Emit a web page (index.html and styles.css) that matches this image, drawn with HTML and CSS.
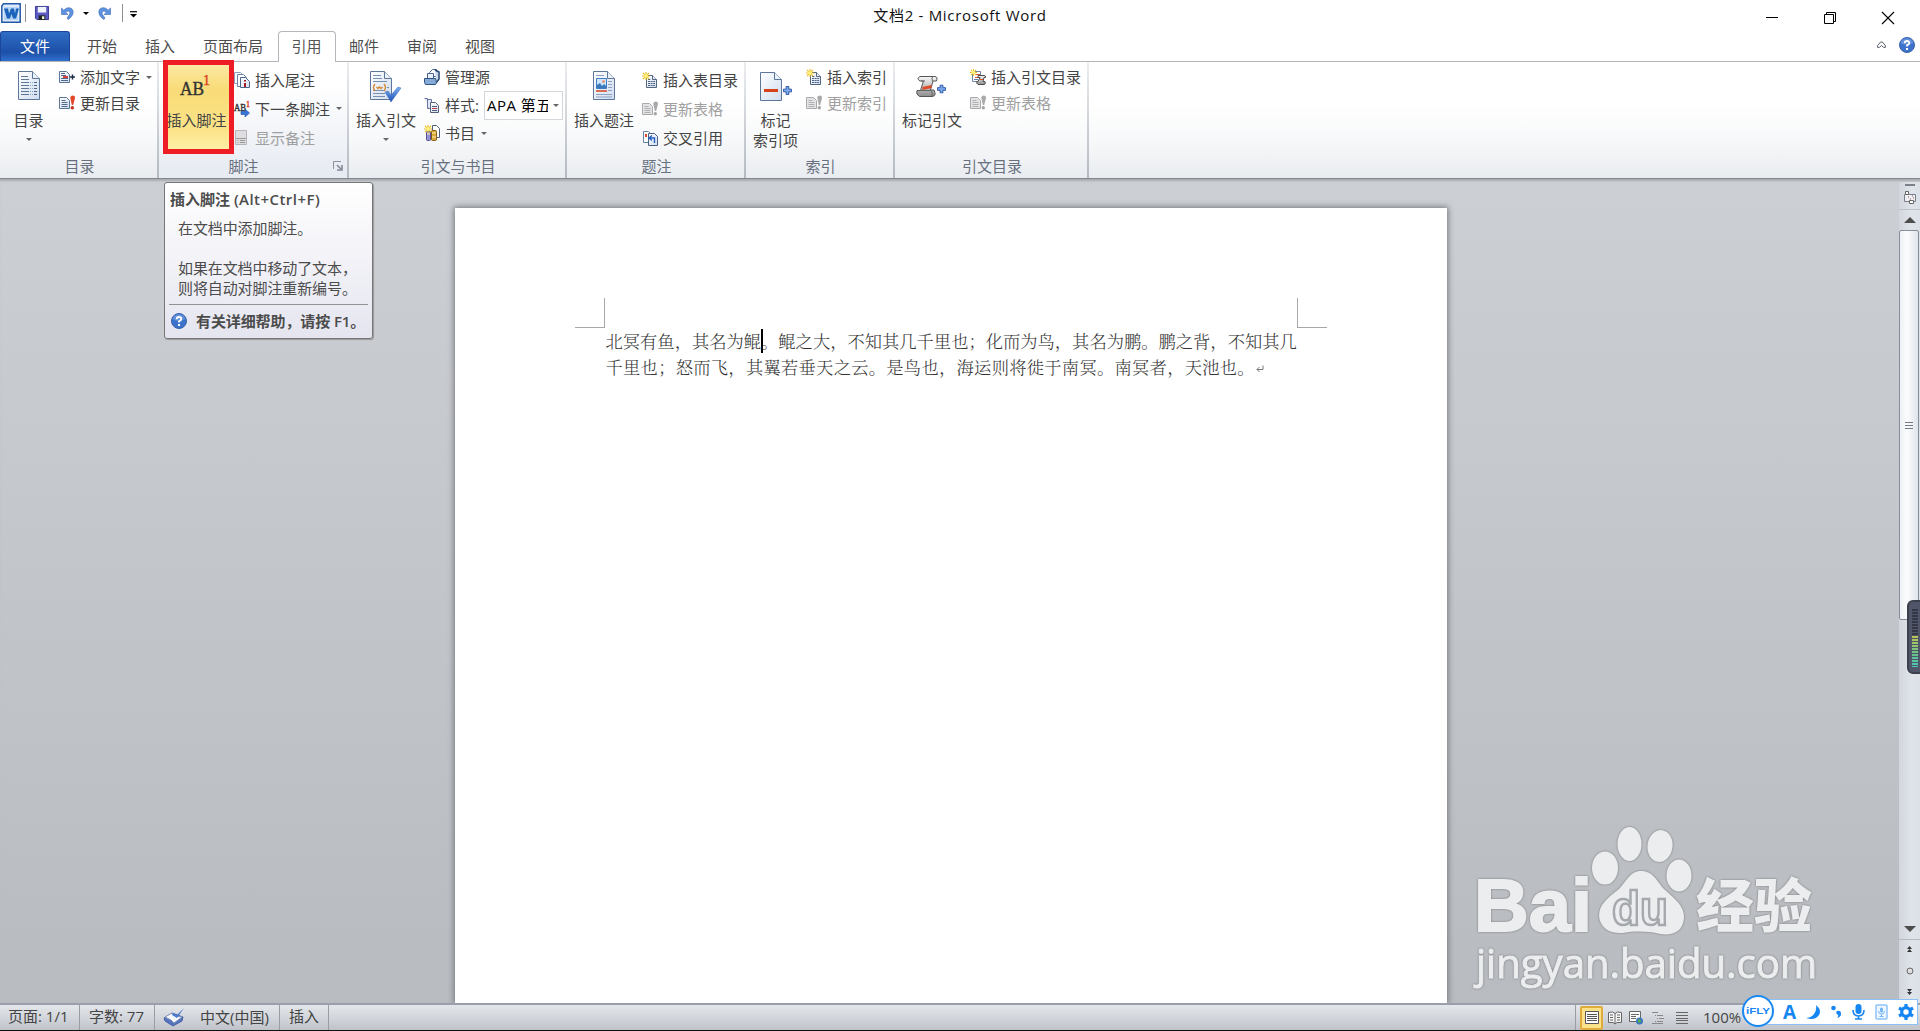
FILE: index.html
```html
<!DOCTYPE html>
<html lang="zh-CN">
<head>
<meta charset="utf-8">
<title>文档2 - Microsoft Word</title>
<link rel="stylesheet" href="styles.css">
</head>
<body>
<svg width="0" height="0" class="defs">
  <defs>
    <linearGradient id="paper" x1="0" y1="0" x2="1" y2="1"><stop offset="0" stop-color="#fff"/><stop offset="1" stop-color="#cfdcf0"/></linearGradient>
    <linearGradient id="blue" x1="0" y1="0" x2="0" y2="1"><stop offset="0" stop-color="#7fb0ee"/><stop offset="1" stop-color="#1d4fb4"/></linearGradient>
    <linearGradient id="metal" x1="0" y1="0" x2="0" y2="1"><stop offset="0" stop-color="#f8f8f8"/><stop offset="1" stop-color="#8e8e8e"/></linearGradient>
    <symbol id="star" viewBox="0 0 8 8"><path d="M4 0v8M0 4h8M1 1l6 6M7 1L1 7" stroke="#e9bf2b" stroke-width="1.2"/><circle cx="4" cy="4" r="2" fill="#fff27c"/></symbol>
    <symbol id="update" viewBox="0 0 16 16"><path d="M.5 2.500h7l3 3v8H.5z" fill="url(#paper)" stroke="#5c7597"/><path d="M2.500 5.500h4M2.500 7.500h6M2.500 9.500h6M2.500 11.500h6" stroke="#53698a"/><path d="M11.300 3q0-2.500 2.500-2.500T16 3l-1.800 7h-1.400z" fill="#e2472a"/><circle cx="13.300" cy="12.700" r="1.700" fill="#c92e16"/></symbol>
    <symbol id="update-off" viewBox="0 0 16 16"><path d="M.5 2.500h7l3 3v8H.5z" fill="#e4e4e6" stroke="#aaaaad"/><path d="M2.500 5.500h4M2.500 7.500h6M2.500 9.500h6M2.500 11.500h6" stroke="#b1b1b4"/><path d="M11.300 3q0-2.500 2.500-2.500T16 3l-1.800 7h-1.400z" fill="#aaa"/><circle cx="13.300" cy="12.700" r="1.700" fill="#a5a5a5"/></symbol>
    <symbol id="index" viewBox="0 0 16 16"><path d="M4.500 3.500h6l4 4v8h-10z" fill="url(#paper)" stroke="#54657e"/><path d="M10.500 3.500v4h4" fill="#e7eef8" stroke="#54657e"/><path d="M6 7.500h3M6 9.500h7M6 11.500h7M6 13.500h7" stroke="#4c6284" stroke-dasharray="2 .6"/><use href="#star" width="8" height="8"/></symbol>
    <symbol id="help" viewBox="0 0 16 16"><circle cx="8" cy="8" r="7.500" fill="#3d73cb" stroke="#3a62ae"/><path d="M1.500 6a6.800 6.800 0 0 1 13 0q-7 4-13 0z" fill="#719de0" opacity=".7"/><path d="M5.700 6.200Q5.700 4 8 4t2.300 2Q10.300 7.300 8 8.300v1.200" fill="none" stroke="#fff" stroke-width="1.800"/><path d="M7 11h2v2H7z" fill="#fff"/></symbol>
    <symbol id="plus" viewBox="0 0 10 10"><path d="M3.500.5h3v3h3v3h-3v3h-3v-3h-3v-3h3z" fill="#7aa7ee" stroke="#234f9c"/></symbol>
  </defs>
</svg>

<header class="titlebar">
  <div class="quick">
    <svg class="word" width="20" height="20" viewBox="0 0 20 20"><path d="M2.500.8h16.700v18.400H.8V3z" fill="#dcebfb" stroke="#2459a5" stroke-width="1.500"/><path d="M3 4h14v13H3z" fill="#b8d4f3"/><path d="M3 5.500h4l1 5 2-5h3l1 5 1-5h3l-3 10h-3l-1.500-4.500L9 15.500H6z" fill="#1b63bb"/></svg>
    <i class="vline"></i>
    <svg class="save" width="14" height="14" viewBox="0 0 15 15"><path d="M.5.5h14v14H2L.5 13z" fill="#5a5ac2" stroke="#34348d"/><path d="M3 1h9v6H3z" fill="#f0f3fb"/><path d="M4 10h7v5H4z" fill="#222"/><path d="M7.500 11H10v3H7.500z" fill="#e9f4d7"/></svg>
    <svg class="undo" width="13" height="13" viewBox="0 0 13 13"><path d="M.5 1v6.500H7L4.800 5.600C7 3 10 4 8.500 7.500L6 11l1 1.500C13 9 13.500 3 10 1.200 7.500 0 4.500 1 2.800 3.200z" fill="#5d92df" stroke="#3e69b9" stroke-width=".6"/></svg>
    <i class="tri dark"></i>
    <svg class="redo" width="13" height="13" viewBox="0 0 13 13"><path d="M12.500 1v6.500H6l2.200-1.900C6 3 3 4 4.500 7.500L7 11l-1 1.500C0 9-.5 3 3 1.200c2.500-1.200 5.500-.2 7.200 2z" fill="#5d92df" stroke="#3e69b9" stroke-width=".6"/></svg>
    <i class="vline second"></i>
    <svg class="custom" width="7" height="7" viewBox="0 0 7 7"><path d="M0 .7h7" stroke="#000" stroke-width="1.200"/><path d="M0 3h7L3.500 6.500z"/></svg>
  </div>
  <h1>文档2 - Microsoft Word</h1>
  <div class="window">
    <svg width="12" height="12" viewBox="0 0 12 12"><path d="M0 5.500h12" stroke="#000"/></svg>
    <svg width="12" height="12" viewBox="0 0 12 12"><path d="M.5 2.500h9v9h-9zM2.500 2.500v-2h9v9h-2" fill="none" stroke="#000"/></svg>
    <svg width="12" height="12" viewBox="0 0 12 12"><path d="M0 0l12 12M12 0L0 12" stroke="#000" stroke-width="1.100"/></svg>
  </div>
</header>

<nav class="tabs">
  <a class="file">文件</a><a>开始</a><a>插入</a><a>页面布局</a><a class="current">引用</a><a>邮件</a><a>审阅</a><a>视图</a>
  <div class="tabtools">
    <svg width="9" height="8" viewBox="0 0 9 8"><path d="M.6 6.400V4.500L3.600 1h1.800l3 3.500v1.900H6.500l-2-2-2 2z" fill="#fff" stroke="#59606a"/></svg>
    <svg width="16" height="16"><use href="#help"/></svg>
  </div>
</nav>

<main class="ribbon">
  <section class="group g1">
    <div class="body">
      <div class="big">
        <svg width="32" height="32" viewBox="0 0 32 32"><path d="M5.500 1.500h14l7 7v21h-21z" fill="url(#paper)" stroke="#5d7699"/><path d="M19.500 1.500v7h7" fill="#e9f0fa" stroke="#5d7699"/><path d="M8 6.500h7M8 9.500h8M8 12.500h8M8 15.500h8M8 18.500h8M8 21.500h8M8 24.500h8" stroke="#5f7698"/><path d="M17 12.500h3M17 15.500h3M17 18.500h3M17 21.500h3M17 24.500h3" stroke="#86a1c4" stroke-dasharray="1 1"/><path d="M21 12.500h3M21 15.500h3M21 18.500h3M21 21.500h3M21 24.500h3" stroke="#4c6284"/></svg>
        <span>目录</span><i class="tri"></i>
      </div>
      <div class="stack two">
        <div class="row"><svg width="16" height="16"><path d="M.5 2.500h7l3 3v8H.5z" fill="url(#paper)" stroke="#5c7597"/><path d="M2 4.500h4M2 11.500h7M2 9.500h7M2 6.500h5" stroke="#53698a"/><path d="M4 7h5v2H4z" fill="#da4141"/><path d="M11 8h5M13.500 5.500v5" stroke="#1f2f48" stroke-width="1.500"/></svg><span>添加文字</span><i class="tri"></i></div>
        <div class="row"><svg width="16" height="16"><use href="#update"/></svg><span>更新目录</span></div>
      </div>
    </div>
    <h2>目录</h2>
  </section>

  <section class="group g2">
    <div class="body">
      <div class="big hot">
        <svg width="32" height="32" viewBox="0 0 32 32"><text x="-1" y="25" class="ab" textLength="24" lengthAdjust="spacingAndGlyphs">AB</text><text x="22" y="15" class="sup">1</text></svg>
        <span>插入脚注</span>
      </div>
      <div class="stack three">
        <div class="row"><svg width="16" height="16"><path d="M.5.5h6l3 3v8h-9z" fill="#fff" stroke="#8ba0be"/><path d="M3.500 2.500h6l3 3v9h-9z" fill="#fff" stroke="#6983a8"/><path d="M6.500 5.500h5l4 4v6h-9z" fill="url(#paper)" stroke="#4e658a"/><path d="M10 8h2v1.500h-2zM10 11h2v4h-2z" fill="#a51d1d"/></svg><span>插入尾注</span></div>
        <div class="row"><svg width="16" height="16"><text x="0" y="10" class="ab mini" textLength="12" lengthAdjust="spacingAndGlyphs">AB</text><text x="12" y="6" class="sup mini">1</text><path d="M7 10.500h4V8l4.500 4-4.500 4v-2.500H7z" fill="#3574d8" stroke="#24509f" stroke-width=".6"/></svg><span>下一条脚注</span><i class="tri"></i></div>
        <div class="row off"><svg width="16" height="16"><path d="M1.500.5h11v14h-11z" fill="#dedee1" stroke="#b5b5ba"/><path d="M2 8.500h10" stroke="#999"/><path d="M3.500 10.500h1M6 10.500h5M3.500 12.500h1M6 12.500h5" stroke="#999"/></svg><span>显示备注</span></div>
      </div>
    </div>
    <h2>脚注</h2>
    <svg class="launcher" width="10" height="10" viewBox="0 0 10 10"><path d="M.5 8V.5H8" fill="none" stroke="#8a919c"/><path d="M4 9h5V4M4 4l4 4" fill="none" stroke="#848b96" stroke-width="1.600"/></svg>
    <div class="marker"></div>
  </section>

  <section class="group g3">
    <div class="body">
      <div class="big">
        <svg width="32" height="32" viewBox="0 0 32 32"><path d="M.5 1.500h14l7 7v21H.5z" fill="url(#paper)" stroke="#5d7699"/><path d="M14.500 1.500v7h7" fill="#e9f0fa" stroke="#5d7699"/><path d="M3 5.500h8M3 8.500h9M3 11.500h14M3 20.500h12M3 23.500h12M3 26.500h12M17 17.500h2" stroke="#7890b0"/><path d="M5 14q-3 3.500 0 7M14 14q3 3.500 0 7M6.500 17l1.500 1.500L9.500 17l1.500 1.500 1.500-1.500" fill="none" stroke="#d68528" stroke-width="1.300"/><path d="M15 22l3-1 3 4 7-8 3 1-10 14z" fill="url(#blue)" stroke="#326abd" stroke-width=".5"/></svg>
        <span>插入引文</span><i class="tri"></i>
      </div>
      <div class="stack cite">
        <div class="row"><svg width="16" height="16"><path d="M5.500 3.500l3-3h4v7h-7z" fill="#fff" stroke="#46658f"/><path d="M11 1l4 2v7l-3 4" fill="#cbd9ed" stroke="#26456f" stroke-width="1.500"/><path d="M3.500 4.500h6v6h-6z" fill="#e9f0fa" stroke="#46658f"/><path d="M.5 9.500h11l1 4-1 2H1.500l-1-2z" fill="#86a9d8" stroke="#31547f"/></svg><span>管理源</span></div>
        <div class="row"><svg width="16" height="16"><path d="M.5 1.500h3v9l2 1M3.500 2.500h4v9h-4z" fill="#e3e8f7" stroke="#6974a4"/><path d="M6.500 5.500h5l3 3v7h-8z" fill="url(#paper)" stroke="#56627b"/><path d="M8 9.500h5M8 13.500h5" stroke="#555f79"/><path d="M8 11.500h5" stroke="#c33c4a"/></svg><span>样式:</span><div class="select"><b>APA 第五</b><i class="tri"></i></div></div>
        <div class="row"><svg width="16" height="16"><path d="M8.500.5h4l3 3v9h-7z" fill="#fff" stroke="#4f6078"/><rect x="2.500" y="6.500" width="4" height="9" rx="1" fill="#9694d4" stroke="#554e91"/><rect x="7.500" y="5.500" width="5" height="10" rx="1" fill="#d9a73a" stroke="#876018"/><path d="M3 9h3M8 8h4M8 12h4" stroke="#fff2b0"/><use href="#star" width="8" height="8"/></svg><span>书目</span><i class="tri"></i></div>
      </div>
    </div>
    <h2>引文与书目</h2>
  </section>

  <section class="group g4">
    <div class="body">
      <div class="big">
        <svg width="32" height="32" viewBox="0 0 32 32"><path d="M5.500 1.500h14l7 7v21h-21z" fill="url(#paper)" stroke="#5d7699"/><path d="M19.500 1.500v7h7" fill="#e9f0fa" stroke="#5d7699"/><path d="M8 5.500h8M20 11.500h4M20 14.500h4M20 17.500h4M20 20.500h4M8 24.500h16M8 27h16" stroke="#8ca1bf"/><path d="M8.500 8.500h10v10h-10z" fill="#cde6fb" stroke="#407cc1"/><path d="M9 18v-3l3-2 2 3 2-2 2 2v2z" fill="#3b79bd"/><circle cx="15.500" cy="11.500" r="1.300" fill="#ef8650"/><path d="M8 21h11" stroke="#d64521" stroke-width="1.500"/></svg>
        <span>插入题注</span>
      </div>
      <div class="stack three">
        <div class="row"><svg width="16" height="16"><use href="#index"/></svg><span>插入表目录</span></div>
        <div class="row off"><svg width="16" height="16"><use href="#update-off"/></svg><span>更新表格</span></div>
        <div class="row"><svg width="16" height="16"><path d="M1.500 1.500h5l2 2v9h-7z" fill="#fff" stroke="#6880a4"/><path d="M3 4h2v3H3z" fill="#dc4a2b"/><path d="M6.500 3.500h6l3 3v9h-9z" fill="url(#paper)" stroke="#466084"/><path d="M12.500 13V8H8M10 5.500L7 8l3 2.500" fill="none" stroke="#285fc0" stroke-width="1.400"/></svg><span>交叉引用</span></div>
      </div>
    </div>
    <h2>题注</h2>
  </section>

  <section class="group g5">
    <div class="body">
      <div class="big">
        <svg width="32" height="32" viewBox="0 0 32 32"><path d="M.5 2.500h14l7 7v21H.5z" fill="url(#paper)" stroke="#5d7699"/><path d="M14.500 2.500v7h7" fill="#e9f0fa" stroke="#5d7699"/><path d="M4 19h14v3H4z" fill="#d6401a"/><use href="#plus" x="23" y="16" width="9" height="9"/></svg>
        <span>标记<br>索引项</span>
      </div>
      <div class="stack two">
        <div class="row"><svg width="16" height="16"><use href="#index"/></svg><span>插入索引</span></div>
        <div class="row off"><svg width="16" height="16"><use href="#update-off"/></svg><span>更新索引</span></div>
      </div>
    </div>
    <h2>索引</h2>
  </section>

  <section class="group g6">
    <div class="body">
      <div class="big">
        <svg width="32" height="32" viewBox="0 0 32 32"><path d="M4 6.500h15q3 .5 1.500 4.500H17l-2.500 9H18q3 6-2 6.500H3.500Q-.5 24.500 1 20.500h3.500l3-9.500H4q-4-2.500 0-4.500z" fill="url(#metal)" stroke="#555"/><path d="M17 6.500q-2 1-.5 4.500M5 11h4M4 20.500h11q2 2 1 5.500" fill="none" stroke="#666"/><path d="M6.500 17l9-2v3l-9 2z" fill="#df4b25"/><use href="#plus" x="21" y="14.500" width="9" height="9"/></svg>
        <span>标记引文</span>
      </div>
      <div class="stack two">
        <div class="row"><svg width="16" height="16"><path d="M2.500 2.500h8v10h-8z" fill="#fff" stroke="#6e84a8"/><path d="M5 5.500h5M5 8.500h4" stroke="#dc5134"/><path d="M4 10.500h4" stroke="#667fa5"/><path d="M8 6.500h6q2 0 1.500 2H14l-1 4h2q1 3-1 3H8q-2-1-1-3h1l2-4H8z" fill="url(#metal)" stroke="#4e4e4e"/><path d="M10 10.500h3" stroke="#df4b25"/><use href="#star" width="7" height="7"/></svg><span>插入引文目录</span></div>
        <div class="row off"><svg width="16" height="16"><use href="#update-off"/></svg><span>更新表格</span></div>
      </div>
    </div>
    <h2>引文目录</h2>
  </section>
</main>

<div class="workspace">
  <article class="page">
    <i class="crop left"></i><i class="crop right"></i>
    <p class="l1">北冥有鱼，其名为鲲<i class="caret"></i>。鲲之大，不知其几千里也；化而为鸟，其名为鹏。鹏之背，不知其几</p>
    <p class="l2">千里也；怒而飞，其翼若垂天之云。是鸟也，海运则将徙于南冥。南冥者，天池也。<svg width="8" height="8" viewBox="0 0 8 8"><path d="M7 .5v4H1M3.500 2L1 4.500 3.500 7" fill="none" stroke="#777"/></svg></p>
  </article>
  <aside class="scroll">
    <div class="ruler"><i class="split"></i><svg width="13" height="13" viewBox="0 0 13 13"><path d="M1.500 3.500h11v7h-11z" fill="#f2eff2" stroke="#777e88"/><path d="M2.500.5h3v3h-3zM6.500 9.500h4v3h-4z" fill="#fff" stroke="#666"/><path d="M5 6h1M7 8h1M9 5h1M10 7h1" stroke="#85606c"/></svg></div>
    <div class="up"><svg width="12" height="6" viewBox="0 0 12 6"><path d="M0 6h12L6 0z" fill="#4d4d4d"/></svg></div>
    <div class="track"><div class="thumb"><i></i></div></div>
    <div class="down"><svg width="12" height="6" viewBox="0 0 12 6"><path d="M0 0h12L6 6z" fill="#4d4d4d"/></svg></div>
    <div class="browse">
      <svg width="7" height="7" viewBox="0 0 7 7"><path d="M1 3h5L3.500 0zM1 6h5L3.500 3z" fill="#333"/></svg>
      <svg width="8" height="8" viewBox="0 0 8 8"><circle cx="4" cy="4" r="3" fill="#ddd" stroke="#666"/></svg>
      <svg width="7" height="7" viewBox="0 0 7 7"><path d="M1 1h5L3.500 4zM1 4h5L3.500 7z" fill="#333"/></svg>
    </div>
  </aside>
  <div class="meter"></div>
  <svg class="watermark" width="360" height="175" viewBox="0 0 360 175">
    <text x="4" y="111" class="bai" textLength="118" lengthAdjust="spacingAndGlyphs">Bai</text>
    <g><ellipse cx="135" cy="48" rx="13" ry="16.500"/><ellipse cx="159.500" cy="24" rx="12" ry="17"/><ellipse cx="190" cy="26" rx="12.500" ry="16" transform="rotate(8 190 26)"/><ellipse cx="209" cy="55.500" rx="12.500" ry="16"/><path d="M171 51c12 0 16 10 22 17 9 9 22 17 21 30-1 14-12 18-24 16-12-3-25-3-37-1-13 1-23-5-24-17 0-12 9-18 20-27 8-8 11-18 22-18z"/></g>
    <text x="142" y="105" class="du" textLength="56" lengthAdjust="spacingAndGlyphs">du</text>
    <text x="226" y="107" class="jy" textLength="116" lengthAdjust="spacingAndGlyphs">经验</text>
    <text x="6" y="158" class="site" textLength="341" lengthAdjust="spacingAndGlyphs">jingyan.baidu.com</text>
  </svg>
</div>

<footer class="status">
  <span class="s1">页面: 1/1</span><span class="s2">字数: 77</span>
  <span class="s3"><svg width="22" height="20" viewBox="0 0 22 20"><path d="M1 11l8-5 11 4-1 4-9 5-8-5z" fill="#5574bf" stroke="#4a63a8"/><path d="M2 10l7-4 3 3 7 1-8 6-3-3z" fill="#f5f7fc" stroke="#8796b5"/><path d="M10 6l3 3 8-8-7 10-5-3z" fill="#4779d1"/></svg>中文(中国)</span><span class="s4">插入</span>
  <div class="views">
    <i class="active"><svg width="14" height="14" viewBox="0 0 14 14"><path d="M.5.5h13v12H.5z" fill="#fff" stroke="#555"/><path d="M2 3.500h10M2 5.500h10M2 7.500h10M2 9.500h10" stroke="#555"/></svg></i>
    <svg width="14" height="14" viewBox="0 0 14 14"><path d="M.5 1.500l4-.5L7 2.500 9.500 1l4 .5v10H9L7 13l-2-1.500H.5zM7 2.500V13" fill="#f5f5f5" stroke="#666"/><path d="M2 4h3M2 6.500h3M2 9h3M9 4h3M9 6.500h3M9 9h3" stroke="#666"/></svg>
    <svg width="14" height="14" viewBox="0 0 14 14"><path d="M.5.500h11v10H.5z" fill="#fafafa" stroke="#666"/><path d="M2 3.500h8M2 5.500h5M2 7.500h5" stroke="#666"/><circle cx="10.500" cy="10" r="3.500" fill="#3978bd"/><path d="M9 8l3 1-1 3-2-1z" fill="#5caf4f"/></svg>
    <svg width="12" height="14" viewBox="0 0 12 14"><path d="M0 1.500h6M3 4.500h1M5 4.500h6M5 7.500h1M7 7.500h5M3 10.500h1M5 10.500h6M0 12.500h11" stroke="#888"/></svg>
    <svg width="12" height="14" viewBox="0 0 12 14"><path d="M0 1.500h12M0 4.500h12M0 7.500h12M0 9.500h12M0 12.500h12" stroke="#666"/></svg>
    <span>100%</span>
  </div>
</footer>

<div class="tip">
  <h3>插入脚注 <em>(Alt+Ctrl+F)</em></h3>
  <p>在文档中添加脚注。</p>
  <p class="more">如果在文档中移动了文本，<br>则将自动对脚注重新编号。</p>
  <div class="tiphelp"><svg width="16" height="16"><use href="#help"/></svg><b>有关详细帮助，请按 F1。</b></div>
</div>

<div class="ime">
  <svg class="badge" width="32" height="32" viewBox="0 0 32 32"><circle cx="16" cy="16" r="15" fill="#fff" stroke="#1a88f2" stroke-width="2"/><text x="4" y="19" textLength="24" lengthAdjust="spacingAndGlyphs">iFLY</text></svg>
  <b>A</b>
  <svg width="15" height="15" viewBox="0 0 15 15"><path d="M10 0q6 5 3 10-4 6-13 3 5 0 8-4t2-9z" fill="#1686f2"/></svg>
  <svg width="11" height="14" viewBox="0 0 11 14"><circle cx="2.500" cy="3" r="2.300" fill="#1686f2"/><path d="M6 6q4-1 4 3 0 3-4 4 2-2 1-3-3-2-1-4z" fill="#1686f2"/></svg>
  <svg width="13" height="16" viewBox="0 0 13 16"><rect x="3.500" width="6" height="10" rx="3" fill="#1686f2"/><path d="M1 6q0 6 5.500 6T12 6M6.500 12v3M3 15h7" fill="none" stroke="#1686f2" stroke-width="1.600"/></svg>
  <svg width="13" height="16" viewBox="0 0 13 16"><rect x="1" y="1" width="11" height="14" rx="1" fill="#eef7ff" stroke="#8ec4fa" stroke-width="1.500"/><rect x="5" y="3.500" width="3" height="5" rx="1.500" fill="#73b5f8"/><path d="M3.500 7q0 3 3 3t3-3M6.500 10v2.500M4.500 12.500h4" fill="none" stroke="#73b5f8"/></svg>
  <svg width="16" height="16" viewBox="0 0 16 16"><circle cx="8" cy="8" r="4.300" fill="none" stroke="#1686f2" stroke-width="3.200"/><path d="M8 0v3M8 13v3M1 4l2.700 1.600M12.300 10.400L15 12M1 12l2.700-1.600M12.300 5.600L15 4" stroke="#1686f2" stroke-width="3.200"/></svg>
</div>
</body>
</html>
```
FILE: styles.css
```css
* { box-sizing: border-box; margin: 0; padding: 0; }
body {
  width: 1920px; height: 1031px; overflow: hidden; position: relative;
  display: flex; flex-direction: column;
  font: 15px/20px "Open Sans", "Noto Sans CJK SC", sans-serif;
  color: #444; background: #fff;
}
svg { display: block; flex: none; overflow: visible; }
i, em { font-style: normal; flex: none; }
.defs { position: absolute; }
.tri { width: 0; height: 0; border: 3px solid transparent; border-top-color: #666; border-bottom: 0; }
.tri.dark { border-top-color: #000; }

.titlebar { height: 31px; flex: none; display: grid; grid-template-columns: 1fr auto 1fr; }
.titlebar h1 { font-size: 15px; font-weight: 400; line-height: 31px; color: #111; white-space: nowrap; letter-spacing: .7px; }
.quick { display: flex; align-items: center; padding: 0 0 5px 1px; }
.vline { width: 1px; height: 18px; background: #8f8f8f; margin: 0 9px 0 4px; }
.vline.second { margin: 0 7px 0 11px; }
.undo { margin: 0 9px 0 12px; }
.redo { margin-left: 9px; }
.custom { margin-top: 3px; }
.window { display: flex; justify-content: flex-end; gap: 46px; padding: 12px 26px 0 0; }

.tabs { height: 31px; flex: none; display: flex; align-items: stretch; border-bottom: 1px solid #b3b7bc; }
.tabs a { padding: 5px 14px 0; color: #4c4c4c; }
.tabs .file { width: 70px; margin-right: 3px; padding: 4px 0 0 19px; color: #fff; background: linear-gradient(#2f6dc4, #1d50a8 70%, #2f71cf); border: 1px solid #1b469a; border-bottom: 0; border-radius: 3px 3px 0 0; }
.tabs .current { background: #fff; border: 1px solid #b3b7bc; border-bottom: 0; border-radius: 4px 4px 0 0; margin-bottom: -1px; padding: 4px 13px 0; color: #555; position: relative; left: .5px; }
.tabtools { margin-left: auto; display: flex; align-items: center; gap: 13px; padding: 0 5px 2px 0; }

.ribbon {
  height: 117px; flex: none; display: grid;
  grid-template-columns: 159px 190px 218px 179px 149px 194px;
  background: linear-gradient(#fff 35%, #f8f9fa 65%, #e9ecf0);
  border-bottom: 1px solid #83888f;
}
.group { position: relative; display: flex; flex-direction: column; border-right: 2px solid #c3c8ce; border-image: linear-gradient(#eceef0, #b3b9c1) 1; }
.body { flex: 1; display: flex; }
.group h2 { font-size: 15px; font-weight: 400; color: #67707f; text-align: center; line-height: 22px; padding: 0 0 1px 2px; }
.g2 { background: linear-gradient(#fff 20%, #e7ebf2 95%); }
.group.g2 h2 { padding-right: 19px; padding-left: 0; }
.big { width: 74px; padding-top: 8px; display: flex; flex-direction: column; align-items: center; text-align: center; white-space: nowrap; }
.big span { margin-top: 8px; }
.big .tri { margin-top: 8px; }
.g1 .big { width: 57px; margin-right: 1px; }
.g2 .big { width: 67px; margin-left: 4px; }
.g5 .big { width: 59px; }
.hot { background: linear-gradient(#fbe9a5, #f9dc78 30%, #fbe388 75%, #fff1aa); height: 91px; border: 1px solid #f6e19b; }
.g2 .hot { padding-top: 7px; }
.stack { display: flex; flex-direction: column; padding-left: 1px; }
.g2 .stack { padding-left: 4px; }
.row { display: flex; align-items: center; gap: 5px; white-space: nowrap; }
.two { padding-top: 2px; }
.two .row { height: 26px; }
.three { padding-top: 3px; }
.three .row { height: 29px; }
.cite { padding-top: 1px; }
.cite .row { height: 28px; }
.row .tri { margin-left: 1px; }
.off { color: #a0a0a0; }
.select { width: 79px; height: 29px; border: 1px solid #d3d6da; background: #fff; display: flex; align-items: center; padding-left: 2px; color: #000; }
.select b { font-weight: 400; width: 61px; overflow: hidden; letter-spacing: .5px; }
.select .tri { margin-left: 5px; }
.ab { font: 19px "Liberation Serif", serif; fill: #333; stroke: #333; stroke-width: .4px; }
.sup { font: 14px "Liberation Serif", serif; fill: #d9431e; stroke: #d9431e; stroke-width: .4px; }
.ab.mini { font-size: 9.500px; }
.sup.mini { font-size: 8px; }
.launcher { position: absolute; right: 4px; bottom: 7px; }
.marker { position: absolute; left: 4px; top: -2px; width: 71px; height: 94px; border: 5px solid #ee1c25; }

.workspace {
  height: 826px; flex: none; position: relative; display: flex;
  background: linear-gradient(#cccfd3, #b8bbc0); border-bottom: 2px solid #9a9fa9;
  box-shadow: inset 0 3px 2px -1px #a9adb1;
}
.page { margin: 29px 0 0 455px; width: 992px; background: #fff; position: relative; padding: 120px 0 0 151px; box-shadow: 0 0 6px 1px #74777c; clip-path: inset(-8px -8px 0 -8px); color: #333; }
.page p { font: 300 17.300px/26px "Noto Serif CJK SC", "Noto Sans CJK SC", serif; white-space: nowrap; display: flex; align-items: center; margin-left: -.5px; }
.page .l2 { letter-spacing: .27px; }
.page p svg { margin-left: 1px; margin-top: 3px; }
.caret { width: 2px; height: 24px; background: #000; margin: 0 -1.500px 0 -.5px; }
.crop { position: absolute; top: 90px; width: 30px; height: 30px; border: 0 solid #a8a8a8; border-bottom-width: 1px; }
.crop.left { left: 120px; border-right-width: 1px; }
.crop.right { left: 842px; border-left-width: 1px; }
.scroll { margin: 3px 0 0 452px; width: 21px; background: linear-gradient(90deg, #d3d7dd, #dfe3ea 60%, #dce0e7); display: flex; flex-direction: column; align-items: center; }
.ruler { height: 28px; width: 100%; border-bottom: 1px solid #bcc1ca; display: flex; flex-direction: column; align-items: center; gap: 5px; padding-top: 2px; }
.split { width: 10px; height: 2px; background: #7c8189; }
.up { height: 20px; padding-top: 7px; }
.track { flex: 1; width: 100%; }
.thumb { width: 20px; height: 390px; border: 1px solid #878e9a; border-radius: 2px; background: linear-gradient(90deg, #eef1f5, #fbfcfd 40%, #dfe4eb); display: flex; align-items: center; justify-content: center; }
.thumb i { width: 8px; height: 7px; background: repeating-linear-gradient(#747b87 0 1px, transparent 1px 3px); }
.down { height: 18px; width: 100%; border-bottom: 1px solid #b4b9c2; padding: 4px 0 0 5px; }
.browse { height: 63px; display: flex; flex-direction: column; align-items: center; justify-content: space-between; padding: 6px 0 8px; }
.meter { position: absolute; left: 1907px; top: 421px; width: 15px; height: 74px; border: 2px solid #3b404c; border-radius: 6px 0 0 6px; background: repeating-linear-gradient(transparent 0 2px, #50556a 2px 3px) 3px 7px/6px 58px no-repeat, linear-gradient(#343846 0 27px, #bfc354 27px, #67c48a 45px, #4cc6b6) 3px 7px/6px 58px no-repeat, #50556a; }
.watermark { position: absolute; left: 1470px; top: 641px; fill: #ecedef; filter: drop-shadow(0 0 1px #777); }
.bai { font: 700 75px "Liberation Sans", sans-serif; stroke: #ecedef; stroke-width: 2px; }
.du { font: 700 48px "Liberation Sans", sans-serif; fill: #ecedef; stroke: #a5a8ad; stroke-width: 2.500px; }
.jy { font: 900 58px "Noto Sans CJK SC", sans-serif; }
.site { font: 40px "Open Sans", sans-serif; stroke: #ecedef; stroke-width: 1px; }

.status { height: 26px; flex: none; display: flex; background: linear-gradient(#e3e6ea, #cfd3d9 60%, #bfc3c9); border-bottom: 1px solid #111; color: #444; line-height: 23px; white-space: nowrap; }
.status > span { border-right: 1px solid #9a9da2; }
.s1 { width: 80px; padding-left: 8px; }
.s2 { width: 75px; padding-left: 9px; }
.s3 { width: 125px; padding-left: 8px; display: flex; align-items: center; gap: 15px; }
.s3 svg { margin-top: -2px; }
.s4 { width: 49px; padding-left: 9px; }
.views { margin-left: 1246px; border-left: 1px solid #9a9da2; padding-left: 4px; display: flex; align-items: center; }
.views svg { margin-right: 7px; }
.views > svg:nth-child(4), .views > svg:nth-child(5) { margin-left: 2px; margin-right: 10px; }
.views .active { width: 23px; height: 24px; margin-right: 5px; background: #fbe28a; border: 2px solid #dfad3b; border-radius: 2px; padding: 3px; }
.views span { margin-left: 5px; }

.tip { position: absolute; left: 164px; top: 182px; width: 209px; height: 157px; border: 1px solid #767676; border-radius: 3px; background: linear-gradient(#fff, #e5e5f0); padding: 6px 4px 0; color: #4c4c4c; white-space: nowrap; box-shadow: 1px 1px 1px #999; }
.tip h3 { font-size: 15px; line-height: 20px; font-weight: 600; padding-left: 1px; }
.tip h3 em { letter-spacing: .45px; }
.tip p { padding: 9px 0 0 9px; letter-spacing: -.1px; }
.tip .more { padding-top: 20px; }
.tiphelp { border-top: 1px solid #929292; margin-top: 6px; padding: 6px 0 0 2px; display: flex; align-items: center; gap: 9px; }
.tiphelp b { font-weight: 600; letter-spacing: -.1px; }

.ime { position: absolute; left: 1758px; top: 999px; width: 160px; height: 26px; background: #fff; border: 1px solid #8cc2f8; display: flex; align-items: center; gap: 10px; padding-left: 24px; }
.badge { position: absolute; left: -17px; top: -5px; }
.badge text { font: 700 9px "Liberation Sans", sans-serif; fill: #1a88f2; }
.ime b { font: 700 19px/24px "Open Sans", sans-serif; color: #1686f2; }
```
